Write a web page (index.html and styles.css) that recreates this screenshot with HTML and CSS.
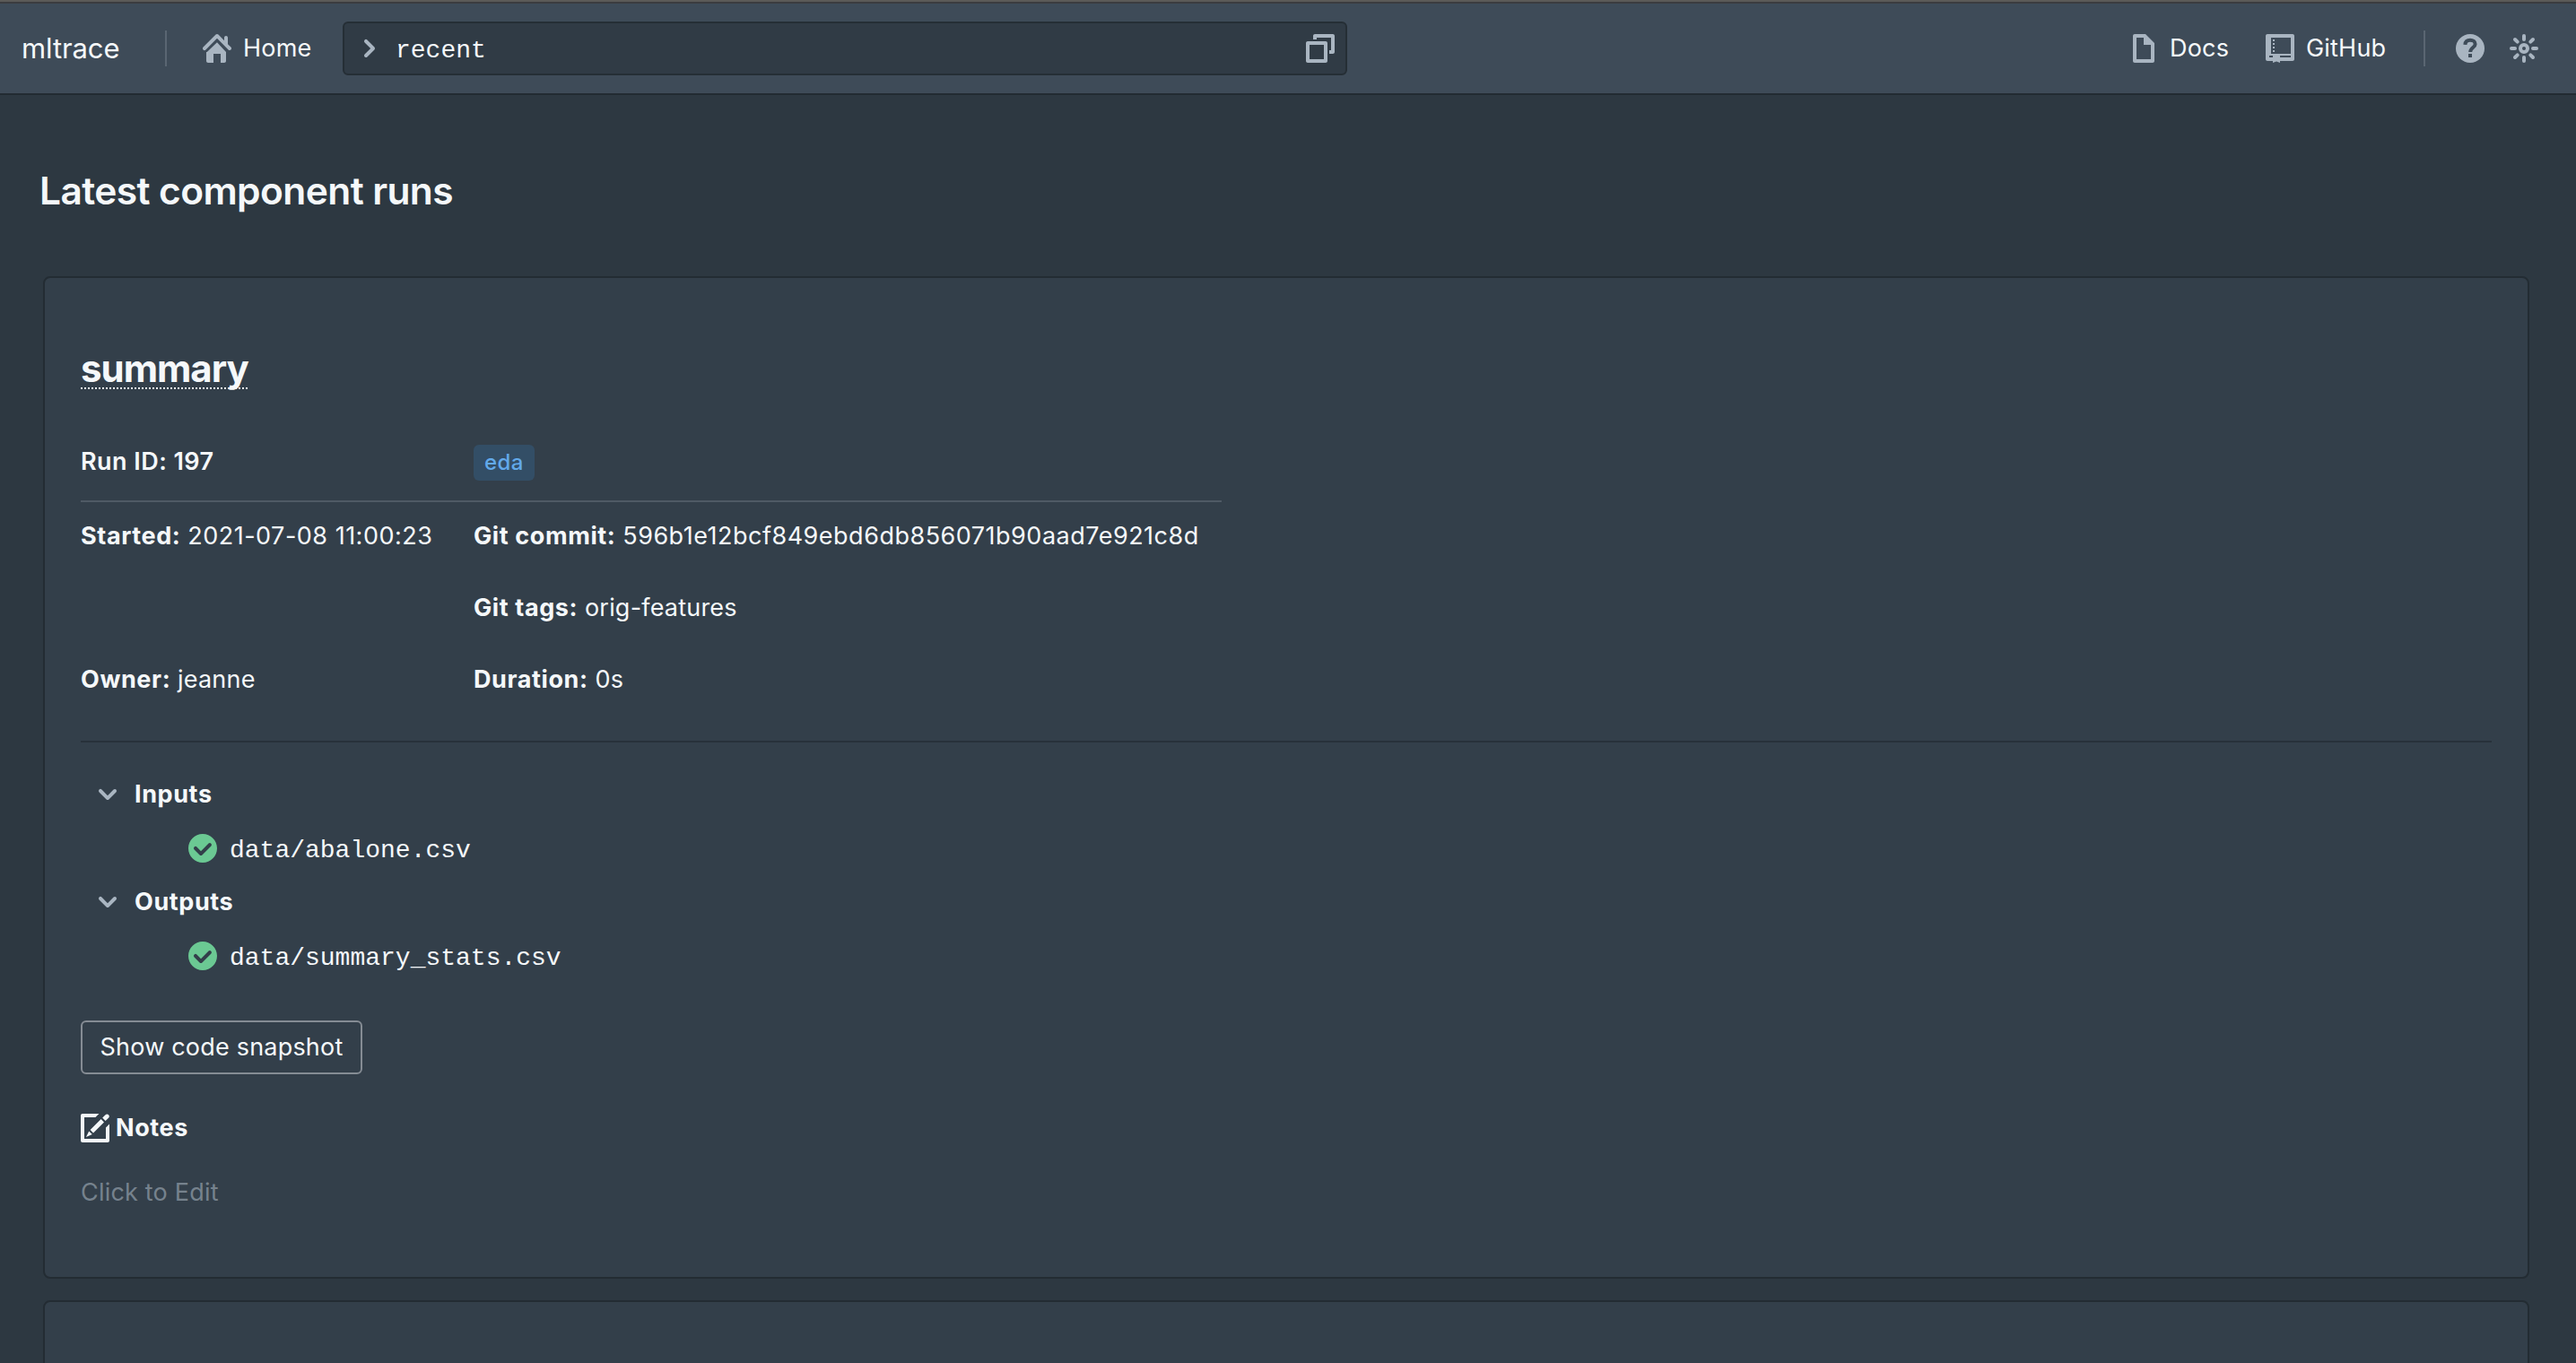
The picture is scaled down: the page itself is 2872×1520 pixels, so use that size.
FILE: index.html
```html
<!DOCTYPE html>
<html lang="en">
<head>
    <meta charset="UTF-8">
    <meta name="viewport" content="width=device-width, initial-scale=1.0">
    <title>mltrace</title>
    <link rel="stylesheet" href="styles.css">
</head>
<body>
    <nav class="navbar">
        <div class="nav-group">
            <span class="brand">mltrace</span>
            <span class="nav-divider"></span>
            <a class="nav-button home">
                <svg class="icon" viewBox="0 0 16 16"><path d="M2 10v5c0 .55.45 1 1 1h3v-5h4v5h2c.55 0 1-.45 1-1v-5L8 4.6 2.4 10zm13.71-2.71L14 5.59V2c0-.55-.45-1-1-1s-1 .45-1 1v1.59L8.71.29C8.53.11 8.28 0 8 0s-.53.11-.71.29l-7 7a1.003 1.003 0 001.42 1.42L8 2.41l6.29 6.29c.18.18.43.3.71.3a1.003 1.003 0 00.71-1.71z"/></svg>
                <span>Home</span>
            </a>
            <div class="command">
                <svg class="icon" viewBox="0 0 16 16"><path d="M10.71 7.29l-4-4a1.003 1.003 0 00-1.42 1.42L8.59 8 5.3 11.29c-.19.18-.3.43-.3.71a1.003 1.003 0 001.71.71l4-4c.18-.18.29-.43.29-.71 0-.28-.11-.53-.29-.71z"/></svg>
                <span class="command-text">recent</span>
                <svg class="icon" viewBox="0 0 16 16"><path d="M15 0H5c-.55 0-1 .45-1 1v2h2V2h8v7h-1v2h2c.55 0 1-.45 1-1V1c0-.55-.45-1-1-1zm-4 4H1c-.55 0-1 .45-1 1v10c0 .55.45 1 1 1h10c.55 0 1-.45 1-1V5c0-.55-.45-1-1-1zm-1 10H2V6h8v8z"/></svg>
            </div>
        </div>
        <div class="nav-group">
            <a class="nav-button docs">
                <svg class="icon" viewBox="0 0 16 16"><path d="M9 0H3c-.55 0-1 .45-1 1v14c0 .55.45 1 1 1h10c.55 0 1-.45 1-1V5L9 0zm3 14H4V2h4v4h4v8z"/></svg>
                <span>Docs</span>
            </a>
            <a class="nav-button github">
                <svg class="icon" viewBox="0 0 16 16"><path fill-rule="evenodd" d="M1 0h14c.55 0 1 .45 1 1v13c0 .55-.45 1-1 1H8v1l-2-.8L4 16v-1H1c-.55 0-1-.45-1-1V1c0-.55.45-1 1-1zm2 2v9h11V2zm-1 10v1h2v-1zm6 0v1h6v-1z"/><path d="M4 3h1v1H4zM4 5h1v1H4zM4 7h1v1H4zM4 9h1v1H4z"/></svg>
                <span>GitHub</span>
            </a>
            <span class="nav-divider"></span>
            <a class="nav-icon">
                <svg class="icon" viewBox="0 0 16 16"><circle cx="8" cy="8" r="8"/><g class="question"><path d="M5.2 5.9C5.3 4.2 6.4 3.4 8 3.4c1.6 0 2.8.8 2.8 2.2 0 1.9-2.7 2-2.7 4.4"/><path d="M7 12h2"/></g></svg>
            </a>
            <a class="nav-icon">
                <svg class="icon" viewBox="0 0 16 16"><g class="rays"><path d="M8 1v2M8 13v2M1 8h2M13 8h2M3 3l1.35 1.35M11.65 11.65L13 13M13 3l-1.35 1.35M4.35 11.65L3 13"/><circle cx="8" cy="8" r="2"/></g></svg>
            </a>
        </div>
    </nav>

    <main class="page">
        <h1>Latest component runs</h1>

        <section class="card">
            <h2><span>summary</span></h2>
            <table class="run-table">
                <thead>
                    <tr>
                        <th><span class="run-id">Run ID: 197</span></th>
                        <th><span class="tag">eda</span></th>
                    </tr>
                </thead>
                <tbody>
                    <tr>
                        <td><b>Started:</b> <span class="hash">2021-07-08 11:00:23</span></td>
                        <td><b>Git commit:</b> <span class="hash">596b1e12bcf849ebd6db856071b90aad7e921c8d</span></td>
                    </tr>
                    <tr>
                        <td></td>
                        <td><b>Git tags:</b> <span>orig-features</span></td>
                    </tr>
                    <tr>
                        <td><b>Owner:</b> <span>jeanne</span></td>
                        <td><b>Duration:</b> <span>0s</span></td>
                    </tr>
                </tbody>
            </table>
            <hr>
            <ul class="tree">
                <li class="tree-node">
                    <svg class="icon" viewBox="0 0 16 16"><path d="M12 5c-.28 0-.53.11-.71.29L8 8.59l-3.29-3.3a1.003 1.003 0 00-1.42 1.42l4 4c.18.18.43.29.71.29s.53-.11.71-.29l4-4A1.003 1.003 0 0012 5z"/></svg>
                    <b>Inputs</b>
                </li>
                <li class="tree-leaf">
                    <svg class="icon ok" viewBox="0 0 16 16"><path d="M8 0C3.58 0 0 3.58 0 8s3.58 8 8 8 8-3.58 8-8-3.58-8-8-8zm4.71 6.71l-5 5c-.18.18-.43.29-.71.29s-.53-.11-.71-.29l-3-3a1.003 1.003 0 011.42-1.42L7 9.59l4.29-4.29a1.003 1.003 0 011.42 1.41z"/></svg>
                    <span class="file">data/abalone.csv</span>
                </li>
                <li class="tree-node">
                    <svg class="icon" viewBox="0 0 16 16"><path d="M12 5c-.28 0-.53.11-.71.29L8 8.59l-3.29-3.3a1.003 1.003 0 00-1.42 1.42l4 4c.18.18.43.29.71.29s.53-.11.71-.29l4-4A1.003 1.003 0 0012 5z"/></svg>
                    <b>Outputs</b>
                </li>
                <li class="tree-leaf">
                    <svg class="icon ok" viewBox="0 0 16 16"><path d="M8 0C3.58 0 0 3.58 0 8s3.58 8 8 8 8-3.58 8-8-3.58-8-8-8zm4.71 6.71l-5 5c-.18.18-.43.29-.71.29s-.53-.11-.71-.29l-3-3a1.003 1.003 0 011.42-1.42L7 9.59l4.29-4.29a1.003 1.003 0 011.42 1.41z"/></svg>
                    <span class="file">data/summary_stats.csv</span>
                </li>
            </ul>
            <button class="snapshot" type="button">Show code snapshot</button>
            <div class="notes">
                <svg class="icon" viewBox="0 0 16 16"><path d="M10.2 0H1C.45 0 0 .45 0 1v14c0 .55.45 1 1 1h14c.55 0 1-.45 1-1V5.8l-2 2V14H2V2h6.2z"/><path d="M5.3 9l6-6L13 4.7l-6 6zM12.1 2.3l1.7-1.7c.4-.4 1-.6 1.6-.1.7.6.6 1.3.2 1.7l-1.8 1.8zM3 13l1.6-3.3 1.8 1.8z"/></svg>
                <b>Notes</b>
            </div>
            <p class="placeholder">Click to Edit</p>
        </section>

        <section class="card"></section>
    </main>
</body>
</html>
```

FILE: styles.css
```css
* {
    box-sizing: border-box;
}

body {
    margin: 0;
    height: 100vh;
    overflow: hidden;
    background-color: #2d3841;
    color: #f5f8fa;
    font-family: Inter, "Liberation Sans", sans-serif;
    font-size: 27px;
    line-height: 36px;
    letter-spacing: 0.2px;
}

.icon {
    width: 32px;
    height: 32px;
    flex: none;
    display: block;
    fill: #a9b5c1;
}

.navbar {
    height: 106px;
    padding: 2px 28px 0 24px;
    border-top: 2px solid #5b5a58;
    border-bottom: 2px solid #222b32;
    box-shadow: inset 0 2px 0 #3b3c3f;
    background-color: #3e4b58;
    display: flex;
    justify-content: space-between;
    align-items: center;
}

.nav-group {
    display: flex;
    align-items: center;
}

.brand {
    width: 120px;
    font-size: 31px;
    letter-spacing: -0.1px;
}

.nav-divider {
    width: 2px;
    height: 40px;
    margin: 0 20px 0 40px;
    background-color: #5a6672;
}

.nav-button {
    display: flex;
    align-items: center;
    gap: 13px;
    height: 60px;
    padding: 0 20px;
    white-space: nowrap;
}

.home {
    width: 176px;
}

.docs {
    width: 152px;
}

.github {
    width: 176px;
}

.github + .nav-divider {
    margin: 0 20px;
}

.nav-icon {
    padding: 0 14px;
}

.question path {
    fill: none;
    stroke: #3e4b58;
    stroke-width: 2;
}

.rays {
    fill: none;
    stroke: #a9b5c1;
    stroke-width: 2;
    stroke-linecap: round;
}

.command {
    display: flex;
    align-items: center;
    width: 1120px;
    height: 60px;
    padding: 0 12px;
    border: 2px solid #252e35;
    border-radius: 6px;
    background-color: #303b45;
}

.command-text {
    flex: 1;
    padding: 5px 0 0 13px;
    font-family: "Liberation Mono", monospace;
    font-size: 28px;
    letter-spacing: 0;
}

.page {
    padding: 79px 52px 0 48px;
}

h1 {
    margin: 0 0 67px -4px;
    font-size: 42.5px;
    line-height: 56px;
    font-weight: 600;
    letter-spacing: -0.6px;
}

.card {
    min-height: 300px;
    margin-bottom: 24px;
    padding: 74px 40px 76px;
    border: 2px solid #232c33;
    border-radius: 8px;
    background-color: #333f4a;
}

h2 {
    margin: 0 0 34px;
    font-size: 42px;
    line-height: 54px;
    font-weight: 700;
    letter-spacing: -1px;
}

/* the dotted rule sits right under the baseline */
h2 span {
    display: block;
    width: 186px;
    height: 50px;
    border-bottom: 2px dotted #f5f8fa;
}

.run-table {
    width: 1272px;
    margin-top: 36px;
    border-collapse: separate;
    border-spacing: 0;
    table-layout: fixed;
    text-align: left;
}

th {
    height: 90px;
    padding: 0 22px;
    border-bottom: 2px solid #4f5a65;
    font-weight: 600;
    letter-spacing: 0.45px;
}

td {
    height: 80px;
    padding: 20px 22px 24px;
    white-space: nowrap;
}

th:first-child, td:first-child {
    width: 416px;
    padding-left: 0;
}

th:first-child {
    padding-top: 2px;
}

b {
    font-weight: 700;
    letter-spacing: 0.6px;
}

.hash {
    letter-spacing: 0.5px;
}

.tag {
    display: block;
    width: 68px;
    height: 40px;
    margin-top: 4px;
    border-radius: 6px;
    background-color: #334e66;
    color: #62a9ea;
    font-size: 24px;
    font-weight: 500;
    line-height: 40px;
    text-align: center;
}

hr {
    height: 2px;
    margin: 26px 0 28px;
    border: none;
    background-color: #27313a;
}

.tree {
    margin: 0 0 42px;
    padding: 0;
    list-style: none;
}

.tree li {
    display: flex;
    align-items: center;
    height: 60px;
}

.tree-node {
    gap: 14px;
    padding-left: 14px;
}

.tree-leaf {
    gap: 14px;
    padding-left: 120px;
}

.icon.ok {
    fill: #6bc993;
}

.file {
    padding-top: 5px;
    font-family: "Liberation Mono", monospace;
    font-size: 28px;
    letter-spacing: 0;
}

.snapshot {
    display: block;
    width: 314px;
    height: 60px;
    padding: 0;
    border: 2px solid #858c94;
    border-radius: 6px;
    background: none;
    color: inherit;
    font: inherit;
    letter-spacing: inherit;
}

.notes {
    display: flex;
    align-items: center;
    gap: 7px;
    height: 32px;
    margin-top: 44px;
}

.notes .icon {
    fill: #f5f8fa;
}

.placeholder {
    margin: 38px 0 0;
    color: #76828d;
}
```
